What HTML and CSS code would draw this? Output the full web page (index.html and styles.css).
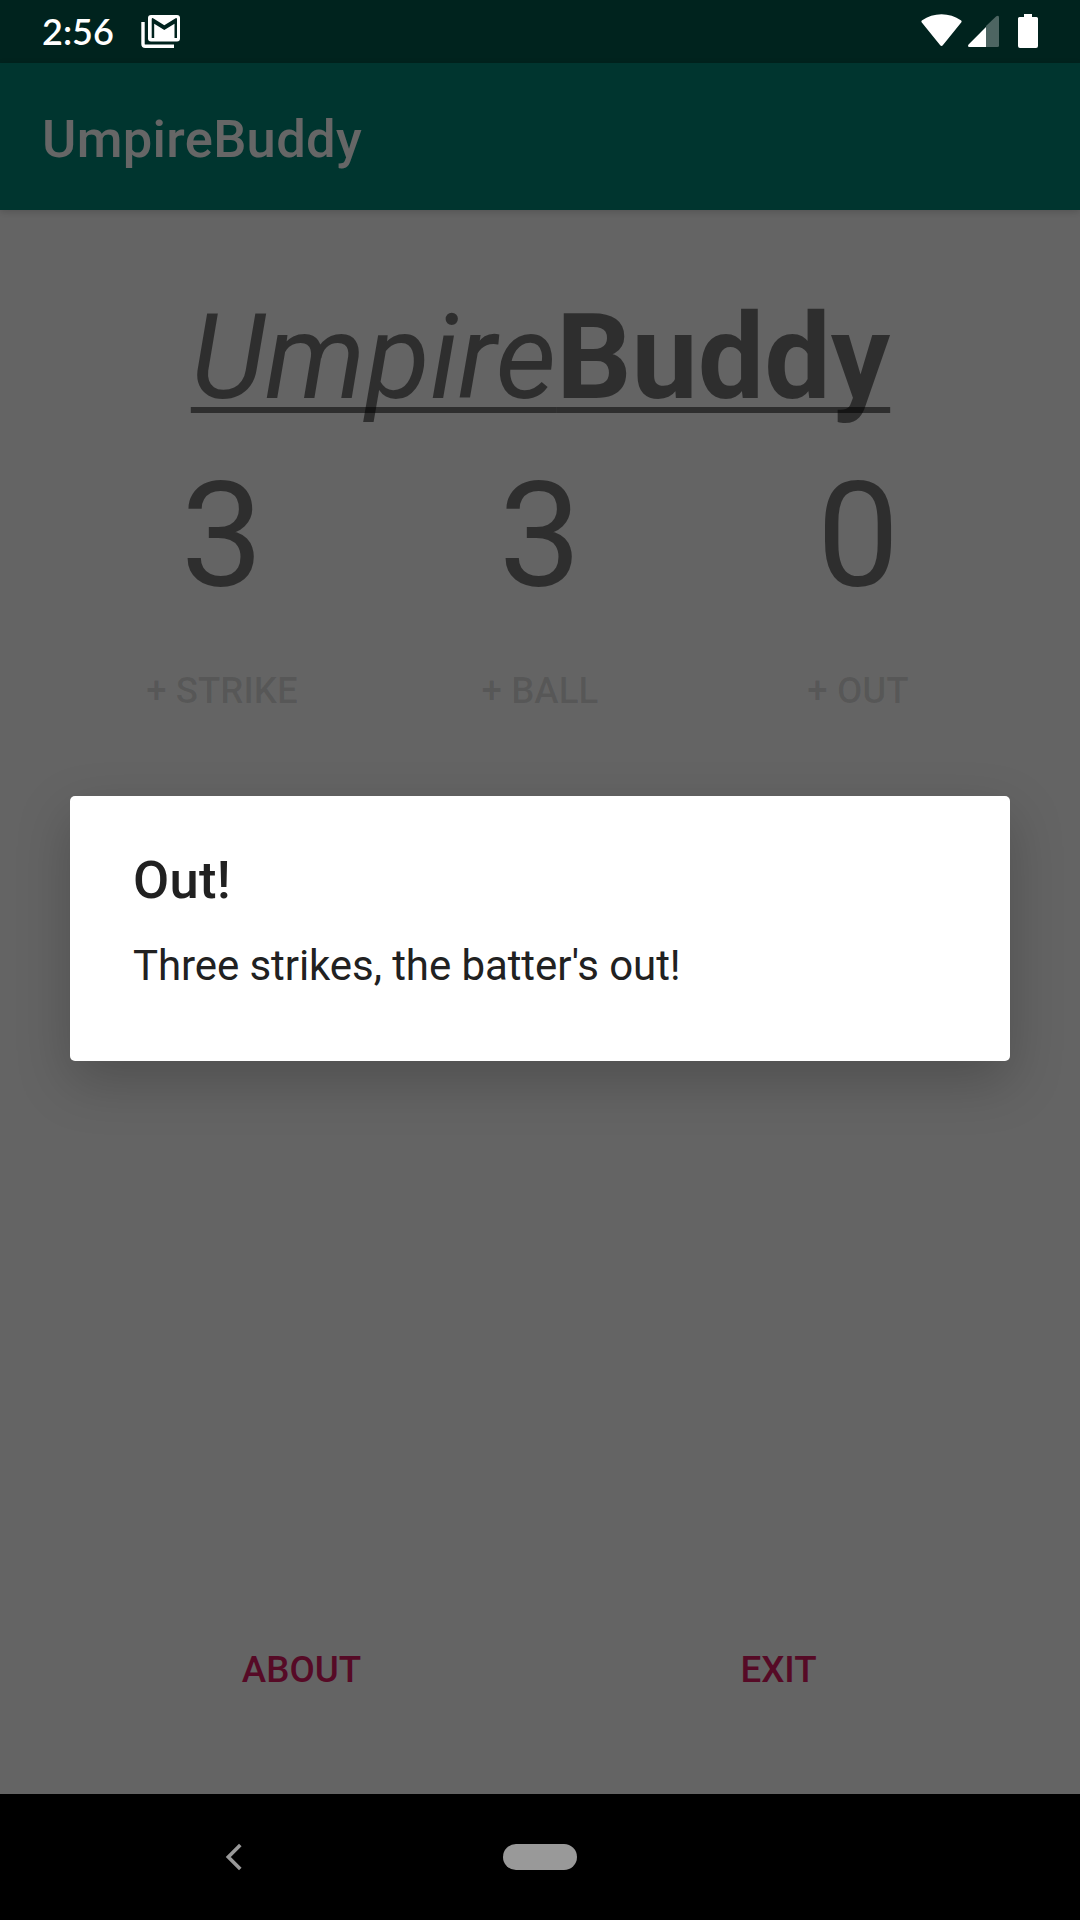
FILE: index.html
```html
<!DOCTYPE html>
<html lang="en">
<head>
<meta charset="utf-8">
<title>UmpireBuddy</title>
<link rel="stylesheet" href="styles.css">
</head>
<body>
<div class="screen">
  <div class="app">
    <header class="app-bar">UmpireBuddy</header>
    <main class="content">
      <h1 class="heading"><i>Umpire</i><b>Buddy</b></h1>
      <div class="counts">
        <span>3</span><span>3</span><span>0</span>
      </div>
      <div class="count-buttons">
        <button class="btn" disabled>+ STRIKE</button>
        <button class="btn" disabled>+ BALL</button>
        <button class="btn" disabled>+ OUT</button>
      </div>
      <div class="footer-buttons">
        <button class="btn">ABOUT</button>
        <button class="btn">EXIT</button>
      </div>
    </main>
  </div>
  <nav class="nav-bar">
    <svg class="back" width="18" height="28" viewBox="0 0 18 28"><path d="M15.3 2 3.3 14l12 12" fill="none" stroke="#999" stroke-width="3.6"/></svg>
    <span class="home"></span>
  </nav>
  <div class="scrim"></div>
  <div class="status-bar">
    <span class="time">2:56</span>
    <svg class="mail" width="40" height="34" viewBox="0 0 40 34">
      <path d="M2 7V29Q2 31.300 4.300 31.300H33" fill="none" stroke="#fff" stroke-width="3.400"/>
      <rect x="7" y="0" width="32" height="26.500" rx="3" fill="#fff"/>
      <path d="M10.700 23V4.500Q10.700 2.500 12.500 3.400L23.300 10.300 34.200 3.400Q36 2.500 36 4.500V23H33.500V8.800L23.300 15 13.200 8.800V23Z" fill="#00231e"/>
    </svg>
    <svg class="signals" width="120" height="36" viewBox="0 0 120 36">
      <path d="M1.800 8.500Q.8 7.300 2.200 6.300C13-1.700 30-1.700 40.800 6.300Q42.200 7.300 41.200 8.500L23 31Q21.500 32.800 20 31Z" fill="#fff"/>
      <path d="M66 12 76.300 2.300Q79 .8 79 3.500V31.500Q79 33 77.500 33H66Z" fill="#4d6562"/>
      <path d="M66 13V33H49.500Q47 32.800 48.600 30.500Z" fill="#fff"/>
      <path d="M104 0H112V3H116.500Q118 3 118 4.500V32Q118 34 116 34H100Q98 34 98 32V4.500Q98 3 99.500 3H104Z" fill="#fff"/>
    </svg>
  </div>
  <section class="dialog">
    <h2 class="dialog-title">Out!</h2>
    <p class="dialog-message">Three strikes, the batter's out!</p>
  </section>
</div>
</body>
</html>
```
FILE: styles.css
```css
* { box-sizing: border-box; }

body {
  margin: 0;
  font-family: Roboto, "Liberation Sans", sans-serif;
}

.screen {
  position: relative;
  width: 1080px;
  height: 1920px;
  overflow: hidden;
  display: flex;
  flex-direction: column;
  background: #000;
}

.app {
  flex: 1;
  display: flex;
  flex-direction: column;
  padding-top: 63px;
  background: linear-gradient(#00574b 63px, #fafafa 63px);
}

.app-bar {
  height: 147px;
  padding: 5px 42px 0;
  background: #008577;
  box-shadow: 0 2px 7px rgba(0, 0, 0, .16);
  color: #fff;
  font-size: 52.5px;
  font-weight: 500;
  letter-spacing: .33px;
  line-height: 142px;
}

.content {
  flex: 1;
  display: flex;
  flex-direction: column;
  padding: 78px 63px 61px;
}

.heading {
  margin: 0 0 0 1px;
  text-align: center;
  font-size: 118.125px;
  font-weight: 400;
  line-height: 140px;
  color: rgba(0, 0, 0, .54);
  text-decoration: underline;
  text-decoration-skip-ink: none;
  text-decoration-thickness: 6px;
  text-underline-offset: 9px;
}

.counts,
.count-buttons {
  display: grid;
  grid-template-columns: repeat(3, 1fr);
  text-align: center;
}

.counts {
  margin-top: 22px;
  font-size: 147px;
  line-height: 172px;
  color: rgba(0, 0, 0, .54);
}

.count-buttons { margin-top: 6px; }

.footer-buttons {
  margin-top: auto;
  display: grid;
  grid-template-columns: repeat(2, 1fr);
}

.btn {
  height: 126px;
  padding: 0;
  border: 0;
  background: none;
  font: 500 36.75px/44px Roboto, "Liberation Sans", sans-serif;
  color: #d81b60;
}

.btn:disabled { color: rgba(0, 0, 0, .13); }

.nav-bar {
  height: 126px;
  display: grid;
  grid-template-columns: 467px 146px 467px;
  place-items: center;
  background: #000;
}

.home {
  width: 74px;
  height: 26px;
  border-radius: 13px;
  background: #999;
}

.scrim {
  position: absolute;
  inset: 0 0 126px;
  background: rgba(0, 0, 0, .6);
}

.status-bar {
  position: absolute;
  inset: 0 0 auto;
  height: 63px;
  display: flex;
  align-items: center;
  padding: 0 40px 0 42px;
  color: #fff;
}

.time {
  width: 99px;
  padding-bottom: 2px;
  font-family: Lato, sans-serif;
  font-size: 36px;
  font-weight: 600;
  line-height: 44px;
}

.signals { margin-left: auto; }

.dialog {
  position: absolute;
  left: 70px;
  right: 70px;
  top: 796px;
  height: 265px;
  padding: 53px 63px;
  border-radius: 5px;
  background: #fff;
  box-shadow: 0 20px 54px rgba(0, 0, 0, .21);
  color: #212121;
}

.dialog-title {
  margin: 0;
  font-size: 52.5px;
  font-weight: 500;
  letter-spacing: .3px;
  line-height: 62px;
}

.dialog-message {
  margin: 30px 0 0;
  font-size: 42px;
  letter-spacing: -.08px;
  line-height: 50px;
}
```
